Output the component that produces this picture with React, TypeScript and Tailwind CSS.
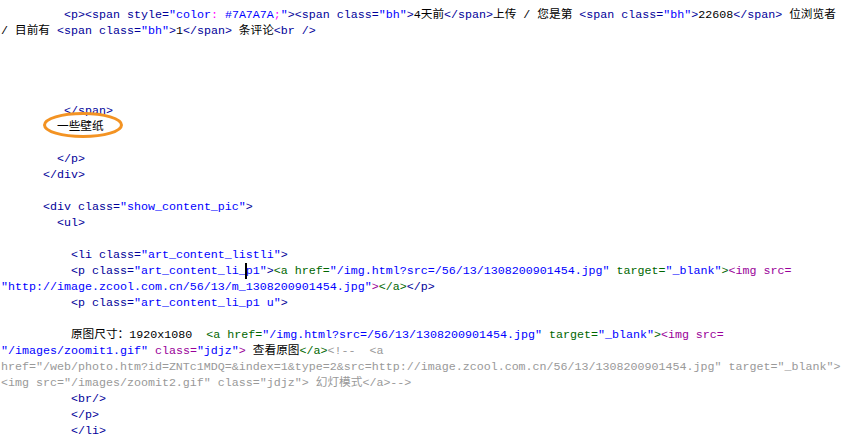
type Tok = [string, string];

const TAG = "text-[#000099]";
const VAL = "text-[#0000ff]";
const A = "text-[#006600]";
const IMG = "text-[#990099]";
const CMT = "text-[#999999]";
const TXT = "text-black";
const PUNC = "text-[#ff00ff]";

const CARET = "__caret__";

const lines: { indent: number; toks: Tok[] }[] = [
  {
    indent: 9,
    toks: [
      [TAG, "<p><span style="],
      [VAL, '"color'],
      [PUNC, ":"],
      [VAL, " #7A7A7A"],
      [PUNC, ";"],
      [VAL, '"'],
      [TAG, "><span class="],
      [VAL, '"bh"'],
      [TAG, ">"],
      [TXT, "4天前"],
      [TAG, "</span>"],
      [TXT, "上传 / 您是第 "],
      [TAG, "<span class="],
      [VAL, '"bh"'],
      [TAG, ">"],
      [TXT, "22608"],
      [TAG, "</span>"],
      [TXT, " 位浏览者"],
    ],
  },
  {
    indent: 0,
    toks: [
      [TXT, "/ 目前有 "],
      [TAG, "<span class="],
      [VAL, '"bh"'],
      [TAG, ">"],
      [TXT, "1"],
      [TAG, "</span>"],
      [TXT, " 条评论"],
      [TAG, "<br />"],
    ],
  },
  { indent: 0, toks: [] },
  { indent: 0, toks: [] },
  { indent: 0, toks: [] },
  { indent: 0, toks: [] },
  { indent: 9, toks: [[TAG, "</span>"]] },
  { indent: 8, toks: [[TXT, "一些壁纸"]] },
  { indent: 0, toks: [] },
  { indent: 8, toks: [[TAG, "</p>"]] },
  { indent: 6, toks: [[TAG, "</div>"]] },
  { indent: 0, toks: [] },
  {
    indent: 6,
    toks: [
      [TAG, "<div class="],
      [VAL, '"show_content_pic"'],
      [TAG, ">"],
    ],
  },
  { indent: 8, toks: [[TAG, "<ul>"]] },
  { indent: 0, toks: [] },
  {
    indent: 10,
    toks: [
      [TAG, "<li class="],
      [VAL, '"art_content_listli"'],
      [TAG, ">"],
    ],
  },
  {
    indent: 10,
    toks: [
      [TAG, "<p class="],
      [VAL, '"art_content_li_'],
      [CARET, ""],
      [VAL, 'p1"'],
      [TAG, ">"],
      [A, "<a href="],
      [VAL, '"/img.html?src=/56/13/1308200901454.jpg"'],
      [A, " target="],
      [VAL, '"_blank"'],
      [A, ">"],
      [IMG, "<img src="],
    ],
  },
  {
    indent: 0,
    toks: [
      [VAL, '"http://image.zcool.com.cn/56/13/m_1308200901454.jpg"'],
      [IMG, ">"],
      [A, "</a>"],
      [TAG, "</p>"],
    ],
  },
  {
    indent: 10,
    toks: [
      [TAG, "<p class="],
      [VAL, '"art_content_li_p1 u"'],
      [TAG, ">"],
    ],
  },
  { indent: 0, toks: [] },
  {
    indent: 10,
    toks: [
      [TXT, "原图尺寸：1920x1080  "],
      [A, "<a href="],
      [VAL, '"/img.html?src=/56/13/1308200901454.jpg"'],
      [A, " target="],
      [VAL, '"_blank"'],
      [A, ">"],
      [IMG, "<img src="],
    ],
  },
  {
    indent: 0,
    toks: [
      [VAL, '"/images/zoomit1.gif"'],
      [IMG, " class="],
      [VAL, '"jdjz"'],
      [IMG, ">"],
      [TXT, " 查看原图"],
      [A, "</a>"],
      [CMT, "<!--  <a"],
    ],
  },
  {
    indent: 0,
    toks: [
      [
        CMT,
        'href="/web/photo.htm?id=ZNTc1MDQ=&index=1&type=2&src=http://image.zcool.com.cn/56/13/1308200901454.jpg" target="_blank">',
      ],
    ],
  },
  {
    indent: 0,
    toks: [[CMT, '<img src="/images/zoomit2.gif" class="jdjz"> 幻灯模式</a>-->']],
  },
  { indent: 10, toks: [[TAG, "<br/>"]] },
  { indent: 10, toks: [[TAG, "</p>"]] },
  { indent: 10, toks: [[TAG, "</li>"]] },
];

function Line({ indent, toks }: { indent: number; toks: Tok[] }) {
  return (
    <div className="h-4 whitespace-pre leading-4">
      {" ".repeat(indent)}
      {toks.map(([cls, text], i) =>
        cls === CARET ? (
          <span key={i} className="relative">
            <span className="absolute left-[-1px] top-[-1px] h-4 w-[2px] bg-black" />
          </span>
        ) : (
          <span key={i} className={cls}>
            {text}
          </span>
        )
      )}
    </div>
  );
}

export default function App() {
  return (
    <div className="relative h-[447px] w-[849px] overflow-hidden bg-white">
      <div
        className="pl-[1px] pt-[7px] text-[11.67px] text-black"
        style={{ fontFamily: "'Liberation Mono', 'Noto Sans CJK SC', monospace" }}
      >
        {lines.map((l, i) => (
          <Line key={i} indent={l.indent} toks={l.toks} />
        ))}
      </div>

      {/* orange annotation ring */}
      <svg
        className="pointer-events-none absolute left-[41px] top-[110px]"
        width="84"
        height="30"
        viewBox="0 0 84 30"
      >
        <ellipse cx="42" cy="15" rx="38.5" ry="11.5" fill="none" stroke="#f39323" strokeWidth="3" />
      </svg>
    </div>
  );
}
